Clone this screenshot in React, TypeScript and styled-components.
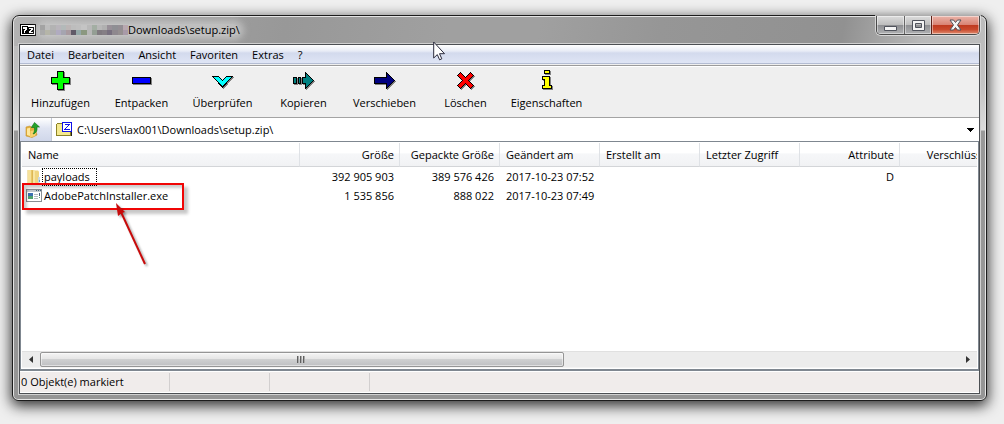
import React from 'react';
import styled, { createGlobalStyle, css } from 'styled-components';

const GlobalStyle = createGlobalStyle`
  *, *::before, *::after { box-sizing: border-box; }
  body {
    margin: 0;
    background: #efefef;
    color: #000;
    font-family: "Open Sans", "Noto Sans", sans-serif;
    font-size: 11px;
    line-height: 16px;
  }
  button, input {
    font: inherit;
    color: inherit;
    border: 0;
    padding: 0;
    margin: 0;
    background: none;
  }
  svg { display: block; flex: none; }
`;

const Page = styled.main`
  display: flex;
  min-height: 100vh;
  padding: 15px 17px 23px 12px;
`;

const Window = styled.section`
  position: relative;
  flex: 1;
  min-width: 0;
  display: flex;
  flex-direction: column;
  padding: 0 6px 6px;
  border: 1px solid #1c1c1c;
  border-radius: 7px 7px 6px 6px;
  background:
    linear-gradient(100deg, #b4b4b4 0, #a6a6a6 60px, #989898 270px, #a0a0a0 430px, #a0a0a0 520px, #969696 640px, #919191 820px, #b9b9b9 900px, #bdbdbd 100%) top / 100% 30px no-repeat,
    linear-gradient(#b8b8b8 0, #c4c4c4 70px, #dcdcdc 114px, #999 115px, #959595 100%);
  box-shadow: inset 0 0 0 1px #e4e4e4, 0 4px 14px 1px rgba(0, 0, 0, 0.8);
`;

const TitleBar = styled.header`
  display: flex;
  align-items: flex-start;
  height: 28px;
  padding-left: 1px;
`;

const Title = styled.h1`
  display: flex;
  align-items: center;
  flex: 1;
  height: 28px;
  margin: 0;
  font-size: 11px;
  font-weight: 400;
`;

const TitleText = styled.span`
  display: flex;
  align-items: center;
  height: 12px;
  margin-left: 4px;
  border-radius: 6px;
  background: rgba(205, 205, 205, 0.7);
  box-shadow: 0 0 7px 4px rgba(205, 205, 205, 0.7);
`;

const Controls = styled.div`
  display: flex;
  height: 19px;
  border: 1px solid #4a4a4a;
  border-top: 0;
  border-radius: 0 0 5px 5px;
  box-shadow: 0 0 0 1px rgba(235, 235, 235, 0.7);
  overflow: hidden;
`;

const ControlButton = styled.button<{ $close?: boolean }>`
  display: flex;
  align-items: center;
  justify-content: center;
  width: 27px;
  box-shadow: inset 0 0 0 1px rgba(255, 255, 255, 0.45);
  background: linear-gradient(#dcdcdc, #bdbdbd 50%, #8e8f92 51%, #b0b1b3);
  & + & { border-left: 1px solid #666; }
  ${({ $close }) => $close && css`
    width: 48px;
    background: linear-gradient(#eab3a8, #d98475 48%, #bf3a20 52%, #c9492d 75%, #e08d70);
    && { border-left-color: #5e2017; }
  `}
`;

const Client = styled.div`
  flex: 1;
  display: flex;
  flex-direction: column;
  min-width: 0;
  border: 1px solid #4c4f53;
  box-shadow: 0 0 0 1px #d0d0d0;
  background: #efefef;
`;

const MenuBar = styled.nav`
  display: flex;
  height: 19px;
  border-bottom: 1px solid #b3bcd2;
  background: linear-gradient(#fff 0, #e8ecf6 6px, #d3daed 8px, #dfe5f5 100%);
`;

const MenuItem = styled.button`
  padding: 1px 7px 0;
`;

const Toolbar = styled.div`
  display: flex;
  height: 52px;
  margin-top: 1px;
  border-top: 1px solid #9b9b9b;
  box-shadow: inset 0 1px #fff;
`;

const Tool = styled.button`
  display: flex;
  flex-direction: column;
  align-items: center;
  width: 81px;
  padding-top: 4px;
  line-height: 22px;
`;

const AddressBar = styled.form`
  display: flex;
  height: 24px;
  border-top: 1px solid #a3a3a3;
  background: #fff;
`;

const UpButton = styled.button`
  display: flex;
  align-items: center;
  width: 32px;
  padding-left: 5px;
  border-right: 1px solid #c3c9d6;
  background: linear-gradient(#fff, #dfe4f2 45%, #d0d7ea);
`;

const AddressField = styled.label`
  display: flex;
  align-items: center;
  flex: 1;
  gap: 4px;
  padding-left: 4px;
`;

const AddressInput = styled.input`
  flex: 1;
  min-width: 0;
  outline: 0;
`;

const DropButton = styled.button`
  display: flex;
  align-items: center;
  justify-content: center;
  width: 17px;
`;

const FileList = styled.section`
  position: relative;
  flex: 1;
  display: flex;
  flex-direction: column;
  min-width: 0;
  padding: 1px;
  border: 1px solid #7f8790;
  border-bottom-width: 2px;
  background: #fff;
`;

const TableArea = styled.div`
  flex: 1;
  min-width: 0;
  overflow: hidden;
`;

const Table = styled.table`
  width: 978px;
  table-layout: fixed;
  border-collapse: separate;
  border-spacing: 0;
  white-space: nowrap;
`;

const Column = styled.col<{ $wide?: boolean }>`
  width: ${({ $wide }) => ($wide ? 278 : 100)}px;
`;

const HeadCell = styled.th<{ $end?: boolean }>`
  height: 24px;
  padding: 0 5px 0 6px;
  border-right: 1px solid #dfe2e6;
  border-bottom: 1px solid #d3d5d8;
  background: linear-gradient(#fff 45%, #f6f7f9 46%, #f1f2f4);
  font-weight: 400;
  text-align: ${({ $end }) => ($end ? 'right' : 'left')};
`;

const Cell = styled.td<{ $end?: boolean }>`
  height: 19px;
  padding: 0 6px;
  text-align: ${({ $end }) => ($end ? 'right' : 'left')};
`;

const NameCell = styled.td`
  height: 19px;
  padding: 0 4px;
`;

const FileName = styled.span`
  display: flex;
  align-items: center;
`;

const NameText = styled.span<{ $focused?: boolean }>`
  padding: 0 6px 0 1px;
  border: 1px dotted ${({ $focused }) => ($focused ? '#000' : 'transparent')};
`;

const ScrollBar = styled.div`
  display: flex;
  height: 17px;
  border-top: 1px solid #e0e0e0;
  border-bottom: 1px solid #f4f4f4;
  background: #ececec;
`;

const ScrollButton = styled.button`
  display: flex;
  align-items: center;
  justify-content: center;
  width: 18px;
`;

const Track = styled.div`
  flex: 1;
  display: flex;
`;

const Thumb = styled.div`
  display: flex;
  align-items: center;
  justify-content: center;
  width: 57%;
  border: 1px solid #959595;
  border-radius: 2px;
  box-shadow: inset 0 0 0 1px rgba(255, 255, 255, 0.5);
  background: linear-gradient(#f4f4f4, #e6e6e6 45%, #cfd0d1 50%, #bfc0c2);
`;

const StatusBar = styled.footer`
  display: flex;
  height: 22px;
  padding: 1px 0;
  border-top: 1px solid #fff;
  border-bottom: 1px solid #fff;
  background: #f0eceb;
`;

const StatusPane = styled.div<{ $first?: boolean }>`
  width: ${({ $first }) => ($first ? 150 : 100)}px;
  padding: 1px 0 0 1px;
  border-right: 1px solid #d2cfcf;
`;

const Highlight = styled.div`
  position: absolute;
  left: 1px;
  top: 41px;
  width: 162px;
  height: 27px;
  border: 2px solid #f00505;
  box-shadow: 4px 4px 3px rgba(0, 0, 0, 0.22), inset 3px 3px 3px rgba(0, 0, 0, 0.2);
`;

const Arrow = styled.svg`
  position: absolute;
  left: 92px;
  top: 60px;
  filter: drop-shadow(2px 2px 1px rgba(0, 0, 0, 0.35));
`;

const Pointer = styled.svg`
  position: absolute;
  left: 420px;
  top: 25px;
`;

const SevenZipLogo = () => (
  <svg width="16" height="12" viewBox="0 0 16 12" shapeRendering="crispEdges">
    <path fill="#000" d="M0 0h16v12H0z" />
    <path fill="#fff" d="M1 1h14v10H1z" />
    <path fill="#000" d="M2 2h6v8H2zM8 3h6v7H8z" />
    <path fill="#fff" d="M3 3h4v3H6v1H5v2H4V6h1V5H3zM9 4h4v2h-1v1h-1v1h2v1H9V7h1V6h1V5H9z" />
  </svg>
);

const mosaicRows = [
  ['#a3a3a3', '#bdbdbd', '#b3b3b3', '#b9b5bb', '#b3b9b9', '#bcb6b6', '#bdbdbd', '#bfbfbf', '#c4c4c4', '#b9b9b9', '#a3aea3', '#b8b8b8', '#b0b0b0', '#989098', '#8f8f94', '#948e94', '#b8a8b0'],
  ['#aaaaaa', '#b5b5a8', '#aeaeae', '#b0abc0', '#a5a5b0', '#a89aa0', '#615a68', '#94a8a8', '#8b9880', '#b8b8b8', '#949e94', '#807a80', '#857f85', '#78707f', '#8e888e', '#958f90', '#a89aa8'],
];

const HiddenUser = () => (
  <svg width="88" height="10" viewBox="0 0 85 10" preserveAspectRatio="none" shapeRendering="crispEdges">
    {mosaicRows.map((row, y) => row.map((fill, x) => (
      <rect key={`${x}-${y}`} x={x * 5} y={y * 5} width="5" height="5" fill={fill} />
    )))}
  </svg>
);

const glyphs: Record<string, React.ReactNode> = {
  add: <path fill="#0f0" d="M7.5 1.500h6v6h6v6h-6v6h-6v-6h-6v-6h6z" />,
  extract: <path fill="#00f" d="M1.500 7.500h18v6h-18z" />,
  test: <path fill="#0ff" d="M.5 6.500h6l4 4 4-4h6l-10 10.500z" />,
  copy: <path fill="#008080" d="M.5 7.500h3v6h-3zM5.500 7.500h2v6h-2zM9.500 7.500h3v-5l8 8-8 8v-5h-3z" />,
  move: <path fill="#000080" d="M.5 7.500h12v-5l8 8-8 8v-5h-12z" />,
  remove: <path fill="#f00" d="M5.500 2.500l5 5 5-5 3 3-5 5 5 5-3 3-5-5-5 5-3-3 5-5-5-5z" />,
  info: <path fill="#ff0" d="M8.500.5h5v3h-5zM6.500 6.500h7v9h2v3h-9v-3h2v-6h-2z" />,
};

const ToolIcon = ({ name }: { name: string }) => (
  <svg width="22" height="22" viewBox="0 0 22 22" shapeRendering="crispEdges" stroke="#000">
    <g transform="translate(1 1)" opacity="0.45" filter="brightness(0)">{glyphs[name]}</g>
    {glyphs[name]}
  </svg>
);

const UpIcon = () => (
  <svg width="16" height="16" viewBox="0 0 16 16">
    <path fill="#e0ae3c" stroke="#c8922b" strokeWidth=".6" d="M1 5l4-1 1 1h4l2 8-5 2.500L1 14z" />
    <path fill="#ffe79a" d="M2 6.500l3-.7V14l-3-1z" />
    <path fill="#f8d26d" d="M5.500 9l7-1.500L10 14l-5 1.500z" />
    <path fill="#22a12b" stroke="#0c7214" strokeWidth=".6" d="M9.500.5l5 4.500h-2.500c.4 4-1 6.500-4 7 1.500-2 1.700-4 1.400-6.500H6.300z" />
  </svg>
);

const ArchiveIcon = () => (
  <svg width="17" height="16" viewBox="0 0 17 16" shapeRendering="crispEdges">
    <path fill="#222" d="M2 14h14V5h-1v8H2z" />
    <path fill="#f5e98f" stroke="#8d8326" d="M.5 13.500v-11l1-1h4l1 1h8v11z" />
    <path fill="#fff" stroke="#1010e8" d="M6.500.5h9v9h-9z" />
    <path fill="#1010e8" d="M9 2h5v1h-1v1h-1v1h-1v1h-1v1h4v1H8V7h1V6h1V5h1V4h1V3H9z" />
  </svg>
);

const FolderIcon = () => (
  <svg width="16" height="16" viewBox="0 0 16 16">
    <path fill="#e8c867" d="M1.500 1h6v14h-5l-1-1z" />
    <path fill="#f7e29a" d="M2 1h3v13H2z" />
    <path fill="#efd580" d="M7 1.500h5l1 1v11L9 15.500H7z" />
    <path fill="#f8e6a2" d="M7 1.500h2v14H7z" />
    <path fill="#dcb655" d="M6 1.500h1V15H6z" />
    <path fill="#c7d8e4" d="M12 8h2v5.500h-2z" />
    <path fill="#55a5d8" d="M13 11h1v2h-1z" />
  </svg>
);

const ProgramIcon = () => (
  <svg width="16" height="16" viewBox="0 0 16 16" shapeRendering="crispEdges">
    <path fill="#fff" stroke="#8a8f94" d="M.5 1.500h15v12H.5z" />
    <path fill="#c3c8cd" d="M1 2h14v2H1z" />
    <path fill="#43637c" d="M10 2h1v1h-1zM12 2h1v1h-1zM14 2h1v1h-1z" />
    <path fill="#3c6fb0" d="M2 5h5v3H2z" />
    <path fill="#4fa36d" d="M2 8h5v3H2z" />
    <path fill="#b5bac0" d="M8 6h4v1H8zM8 8h4v1H8zM8 10h4v1H8z" />
    <path fill="#4a607a" d="M13 5h1v3h-1z" />
    <path fill="#6a7" d="M13 9h1v1h-1z" />
  </svg>
);

const menus = ['Datei', 'Bearbeiten', 'Ansicht', 'Favoriten', 'Extras', '?'];

const tools = [
  ['add', 'Hinzufügen'],
  ['extract', 'Entpacken'],
  ['test', 'Überprüfen'],
  ['copy', 'Kopieren'],
  ['move', 'Verschieben'],
  ['remove', 'Löschen'],
  ['info', 'Eigenschaften'],
];

const columns = [
  { label: 'Name' },
  { label: 'Größe', end: true },
  { label: 'Gepackte Größe', end: true },
  { label: 'Geändert am' },
  { label: 'Erstellt am' },
  { label: 'Letzter Zugriff' },
  { label: 'Attribute', end: true },
  { label: 'Verschlüsselt', end: true },
];

const files = [
  { name: 'payloads', icon: <FolderIcon />, focused: true, cells: ['392 905 903', '389 576 426', '2017-10-23 07:52', '', '', 'D', ''] },
  { name: 'AdobePatchInstaller.exe', icon: <ProgramIcon />, focused: false, cells: ['1 535 856', '888 022', '2017-10-23 07:49', '', '', '', ''] },
];

export default function App() {
  return (
    <>
      <GlobalStyle />
      <Page>
        <Window>
          <TitleBar>
            <Title>
              <SevenZipLogo />
              <TitleText>
                <HiddenUser />
                Downloads\setup.zip\
              </TitleText>
            </Title>
            <Controls>
              <ControlButton aria-label="Minimieren">
                <svg width="13" height="15" viewBox="0 0 13 15"><path fill="#f4f4f4" stroke="#50535c" d="M.5 8.500h12v4H.5z" /></svg>
              </ControlButton>
              <ControlButton aria-label="Maximieren">
                <svg width="13" height="11" viewBox="0 0 13 11"><path fill="#f4f4f4" fillRule="evenodd" stroke="#50535c" d="M.5.5h12v10H.5zM3.500 3.500h6v4h-6z" /></svg>
              </ControlButton>
              <ControlButton $close aria-label="Schließen">
                <svg width="13" height="12" viewBox="0 0 13 12"><path fill="#f4f4f4" stroke="#50535c" strokeLinejoin="round" d="M1 1h3.500l2 2.500L8.500 1H12L8.500 6l3.500 5H8.500l-2-2.500-2 2.500H1l3.500-5z" /></svg>
              </ControlButton>
            </Controls>
          </TitleBar>
          <Client>
            <MenuBar>
              {menus.map((m) => <MenuItem key={m}>{m}</MenuItem>)}
            </MenuBar>
            <Toolbar>
              {tools.map(([icon, label]) => (
                <Tool key={icon}><ToolIcon name={icon} />{label}</Tool>
              ))}
            </Toolbar>
            <AddressBar onSubmit={(e) => e.preventDefault()}>
              <UpButton type="button" aria-label="Aufwärts"><UpIcon /></UpButton>
              <AddressField>
                <ArchiveIcon />
                <AddressInput aria-label="Adresse" defaultValue="C:\Users\lax001\Downloads\setup.zip\" />
              </AddressField>
              <DropButton type="button" aria-label="Verlauf">
                <svg width="7" height="4" viewBox="0 0 7 4" shapeRendering="crispEdges"><path d="M0 0h7v1H6v1H5v1H4v1H3V3H2V2H1V1H0z" /></svg>
              </DropButton>
            </AddressBar>
            <FileList>
              <TableArea>
                <Table>
                  <colgroup>
                    {columns.map((c, i) => <Column key={c.label} $wide={i === 0} />)}
                  </colgroup>
                  <thead>
                    <tr>{columns.map((c) => <HeadCell key={c.label} $end={c.end}>{c.label}</HeadCell>)}</tr>
                  </thead>
                  <tbody>
                    {files.map((f) => (
                      <tr key={f.name}>
                        <NameCell>
                          <FileName>{f.icon}<NameText $focused={f.focused}>{f.name}</NameText></FileName>
                        </NameCell>
                        {f.cells.map((value, i) => <Cell key={i} $end={columns[i + 1].end}>{value}</Cell>)}
                      </tr>
                    ))}
                  </tbody>
                </Table>
              </TableArea>
              <ScrollBar>
                <ScrollButton aria-label="Nach links">
                  <svg width="4" height="7" viewBox="0 0 4 7"><path fill="#333" d="M4 0v7L0 3.500z" /></svg>
                </ScrollButton>
                <Track>
                  <Thumb>
                    <svg width="9" height="7" viewBox="0 0 9 7" shapeRendering="crispEdges"><path fill="#606060" d="M0 0h1v7H0zM3 0h1v7H3zM6 0h1v7H6z" /><path fill="#aaa" d="M1 0h1v7H1zM4 0h1v7H4zM7 0h1v7H7z" /></svg>
                  </Thumb>
                </Track>
                <ScrollButton aria-label="Nach rechts">
                  <svg width="4" height="7" viewBox="0 0 4 7"><path fill="#333" d="M0 0v7l4-3.500z" /></svg>
                </ScrollButton>
              </ScrollBar>
              <Highlight />
              <Arrow width="36" height="66" viewBox="0 0 36 66">
                <path stroke="#c80a0a" strokeWidth="2" d="M8 10l24 52" />
                <path fill="#c80a0a" d="M3 1l9 9-3 1-4 3z" />
              </Arrow>
            </FileList>
            <StatusBar>
              <StatusPane $first>0 Objekt(e) markiert</StatusPane>
              <StatusPane />
              <StatusPane />
            </StatusBar>
          </Client>
          <Pointer width="13" height="20" viewBox="0 0 13 20">
            <path fill="#fff" stroke="#2a2a3c" d="M.7 1v16l3.600-3.400 2.300 5.200 2.200-1-2.300-5.100h5z" />
          </Pointer>
        </Window>
      </Page>
    </>
  );
}
